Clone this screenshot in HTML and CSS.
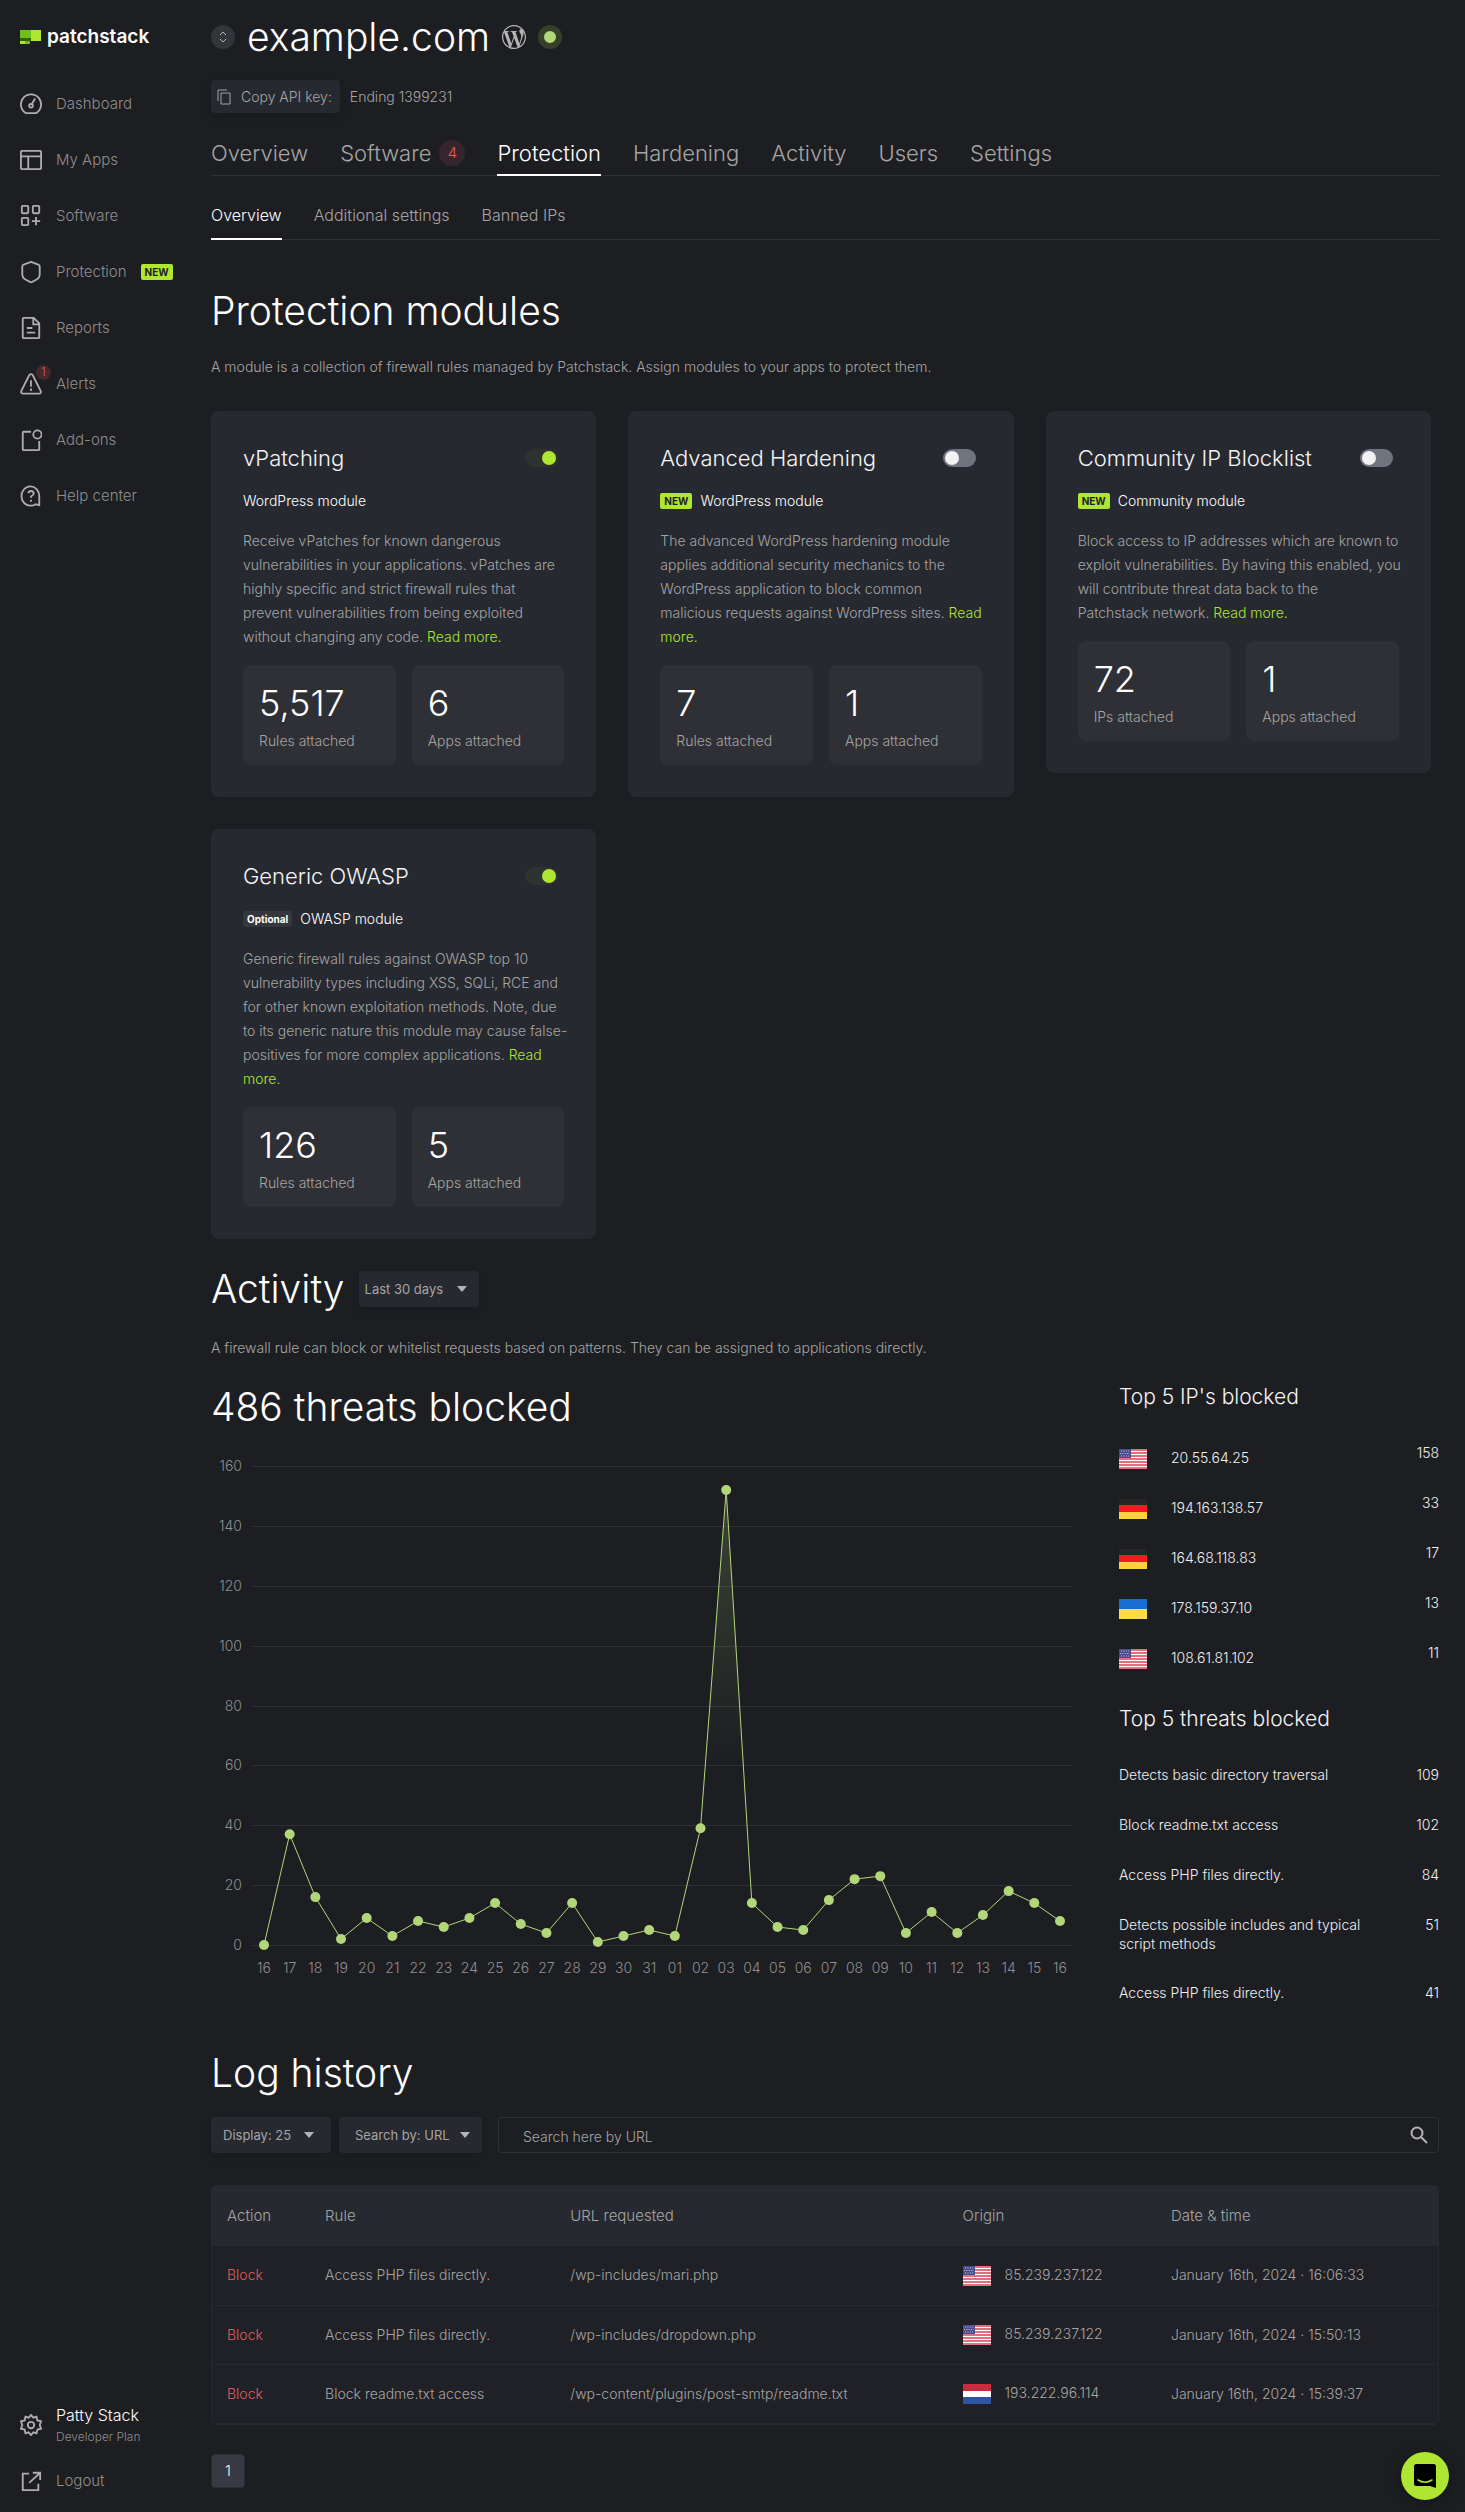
FILE: index.html
```html
<!DOCTYPE html>
<html lang="en">
<head>
<meta charset="utf-8">
<meta name="viewport" content="width=device-width, initial-scale=1">
<title>example.com – Protection</title>
<link rel="stylesheet" href="styles.css">
</head>
<body>
<svg class="sprite" aria-hidden="true">
  <symbol id="flag-us" viewBox="0 0 28 20">
    <rect width="28" height="20" fill="#fff"/>
    <path d="M0 1h28M0 4h28M0 7h28M0 10h28M0 13h28M0 16h28M0 19h28" stroke="#dd3f54" stroke-width="1.6"/>
    <rect width="12" height="9" fill="#4a4a8c"/>
    <path d="M2 2h9M1 4.500h10M2 7h9" stroke="#c9c9e4" stroke-width="1" stroke-dasharray="1 1.400"/>
  </symbol>
  <symbol id="flag-de" viewBox="0 0 28 20">
    <rect width="28" height="7" fill="#262626"/><rect y="6" width="28" height="7" fill="#f01c20"/><rect y="13" width="28" height="7" fill="#fdd23c"/>
  </symbol>
  <symbol id="flag-ua" viewBox="0 0 28 20">
    <rect width="28" height="10" fill="#196dd1"/><rect y="10" width="28" height="10" fill="#ffda4f"/>
  </symbol>
  <symbol id="flag-nl" viewBox="0 0 28 20">
    <rect width="28" height="20" fill="#fff"/><rect width="28" height="7" fill="#ca2c3f"/><rect y="13" width="28" height="7" fill="#2c56a2"/>
  </symbol>
</svg>
<div class="app">
  <aside class="sidebar">
    <a class="logo" href="#">
      <svg width="21" height="15" viewBox="0 0 21 15" aria-hidden="true"><path fill="#6fbf1b" d="M0 0h11v8H0zM5 11h5v3H5z"/><path fill="#afe632" d="M11 0h10v11H11zM0 11h5v3H0z"/><path fill="#35610f" d="M0 8h11v3H0z"/></svg>
      <span>patchstack</span>
    </a>
    <nav class="menu" aria-label="Main">
      <a href="#"><svg class="icon" viewBox="0 0 24 24"><path d="M6.500 22a11 11 0 1 1 11 0z"/><circle cx="12" cy="14" r="2"/><path d="M13 12l3.500-6"/></svg>Dashboard</a>
      <a href="#"><svg class="icon" viewBox="0 0 24 24"><rect x="1" y="2" width="22" height="20" rx="1"/><path d="M1 8h22M9 8v14"/></svg>My Apps</a>
      <a href="#"><svg class="icon" viewBox="0 0 24 24"><rect x="2" y="1" width="7" height="8" rx="1"/><rect x="14" y="1" width="7" height="8" rx="1"/><rect x="2" y="14" width="7" height="8" rx="1"/><path d="M17.500 13v9M13 17.500h9"/></svg>Software</a>
      <a href="#"><svg class="icon" viewBox="0 0 24 24"><path d="M12 1l8 3q1.500.5 1.500 2v9q0 3-3 5L12 23.500l-6.500-3.500q-3-2-3-5V6q0-1.500 1.500-2z"/></svg>Protection <span class="tag">NEW</span></a>
      <a href="#"><svg class="icon" viewBox="0 0 24 24"><path d="M4 1h11l6 6v15q0 1-1 1H4q-1 0-1-1V2q0-1 1-1zM14.500 1v7H21M7.500 12h6M7.500 17h9"/></svg>Reports</a>
      <a href="#"><span class="badged"><svg class="icon" viewBox="0 0 24 24"><path d="M10 2.500q2-2.500 4 0l8.500 17q1 3-2 3h-17q-3 0-2-3zM12 8v7M12 17v2.500"/></svg><span class="dot-count">1</span></span>Alerts</a>
      <a href="#"><svg class="icon" viewBox="0 0 24 24"><path d="M12 3H4q-1 0-1 1v18q0 1 1 1h16q1 0 1-1V13"/><circle cx="19" cy="6" r="4.500"/></svg>Add-ons</a>
      <a href="#"><svg class="icon" viewBox="0 0 24 24"><path d="M21 22V12a9.700 10.500 0 1 0-9 10.500q3 0 5-1.500z"/><path d="M9 9q.5-2.500 3-2.500T15 9q0 2-3 3.500v1.500M12 16v2.200"/></svg>Help center</a>
    </nav>
    <div class="account">
      <a class="user" href="#"><svg class="icon" viewBox="0 0 24 24"><path d="M12 1l2.500 3 3.500-1 1 4 4 1-1.500 4 1.500 4-4 1-1 4-3.500-1L12 23l-2.500-3-3.500 1-1-4-4-1 1.500-4L1 8l4-1 1-4 3.500 1z"/><circle cx="12" cy="12" r="3.500"/></svg><span><strong>Patty Stack</strong><small>Developer Plan</small></span></a>
      <a href="#"><svg class="icon" viewBox="0 0 24 24"><path d="M10 4H3v18h17v-7M14 3h8v8M22 3L10 14"/></svg>Logout</a>
    </div>
  </aside>

  <main class="main">
    <header class="site">
      <button class="switcher" type="button" aria-label="Switch site"><svg width="10" height="14" viewBox="0 0 10 14"><path d="M2 5l3-3 3 3M2 9l3 3 3-3"/></svg></button>
      <h1>example.com</h1>
      <svg class="wp" width="24" height="24" viewBox="0 0 24 24" aria-label="WordPress"><path fill="#b4b4b2" d="M21.469 6.825c.84 1.537 1.318 3.300 1.318 5.175 0 3.979-2.156 7.456-5.363 9.325l3.295-9.527c.615-1.540.820-2.771.820-3.864 0-.405-.026-.780-.070-1.110m-7.981.105c.647-.030 1.232-.105 1.232-.105.582-.075.514-.930-.067-.899 0 0-1.755.135-2.880.135-1.064 0-2.850-.150-2.850-.150-.585-.030-.661.855-.075.885 0 0 .540.061 1.125.090l1.680 4.605-2.370 7.080L5.354 6.900c.649-.030 1.234-.100 1.234-.100.585-.075.516-.930-.065-.896 0 0-1.746.138-2.874.138-.200 0-.438-.008-.690-.015C4.911 3.150 8.235 1.215 12 1.215c2.809 0 5.365 1.072 7.286 2.833-.046-.003-.091-.009-.141-.009-1.060 0-1.812.923-1.812 1.914 0 .890.513 1.643 1.060 2.531.411.720.890 1.643.890 2.977 0 .915-.354 1.994-.821 3.479l-1.075 3.585-3.900-11.610.001.014zM12 22.784c-1.059 0-2.081-.153-3.048-.437l3.237-9.406 3.315 9.087c.024.053.050.101.078.149-1.120.393-2.325.609-3.582.609M1.211 12c0-1.564.336-3.050.935-4.390L7.290 21.709C3.694 19.960 1.212 16.271 1.211 12M12 0C5.385 0 0 5.385 0 12s5.385 12 12 12 12-5.385 12-12S18.615 0 12 0"/></svg>
      <span class="status" role="img" aria-label="Online"></span>
    </header>
    <div class="api">
      <button class="btn copy" type="button"><svg width="14" height="16" viewBox="0 0 14 16"><path d="M1 12V1h9M4 4h9v11H4z"/></svg>Copy API key:</button>
      <span>Ending 1399231</span>
    </div>
    <nav class="tabs" aria-label="Site">
      <a href="#">Overview</a><a href="#">Software <span class="count">4</span></a><a class="on" href="#">Protection</a><a href="#">Hardening</a><a href="#">Activity</a><a href="#">Users</a><a href="#">Settings</a>
    </nav>
    <nav class="tabs subtabs" aria-label="Protection">
      <a class="on" href="#">Overview</a><a href="#">Additional settings</a><a href="#">Banned IPs</a>
    </nav>

    <section class="modules">
      <h2>Protection modules</h2>
      <p class="lead">A module is a collection of firewall rules managed by Patchstack. Assign modules to your apps to protect them.</p>
      <div class="cards">
        <article class="card">
          <div class="card-head"><h3 id="m1">vPatching</h3><input class="toggle" type="checkbox" checked aria-labelledby="m1"></div>
          <p class="kind">WordPress module</p>
          <p class="text">Receive vPatches for known dangerous vulnerabilities in your applications. vPatches are highly specific and strict firewall rules that prevent&nbsp;vulnerabilities from being exploited without changing any code. <a href="#">Read more.</a></p>
          <div class="stats"><div><b>5,517</b><span>Rules attached</span></div><div><b>6</b><span>Apps attached</span></div></div>
        </article>
        <article class="card">
          <div class="card-head"><h3 id="m2">Advanced Hardening</h3><input class="toggle" type="checkbox" aria-labelledby="m2"></div>
          <p class="kind"><span class="tag">NEW</span>WordPress module</p>
          <p class="text">The advanced WordPress hardening module applies additional security mechanics to the WordPress application to block common malicious requests against WordPress sites. <a href="#">Read more.</a></p>
          <div class="stats"><div><b>7</b><span>Rules attached</span></div><div><b>1</b><span>Apps attached</span></div></div>
        </article>
        <article class="card">
          <div class="card-head"><h3 id="m3">Community IP Blocklist</h3><input class="toggle" type="checkbox" aria-labelledby="m3"></div>
          <p class="kind"><span class="tag">NEW</span>Community module</p>
          <p class="text">Block access to IP addresses which are known to exploit vulnerabilities. By having this enabled, you will contribute threat data back to the Patchstack&nbsp;network. <a href="#">Read more.</a></p>
          <div class="stats"><div><b>72</b><span>IPs attached</span></div><div><b>1</b><span>Apps attached</span></div></div>
        </article>
        <article class="card">
          <div class="card-head"><h3 id="m4">Generic OWASP</h3><input class="toggle" type="checkbox" checked aria-labelledby="m4"></div>
          <p class="kind"><span class="tag muted">Optional</span>OWASP module</p>
          <p class="text">Generic firewall rules against OWASP top 10 vulnerability types including XSS, SQLi, RCE and for other known exploitation methods. Note, due to its generic nature this module may cause false-positives for more complex applications. <a href="#">Read more.</a></p>
          <div class="stats"><div><b>126</b><span>Rules attached</span></div><div><b>5</b><span>Apps attached</span></div></div>
        </article>
      </div>
    </section>

    <section class="activity">
      <div class="activity-head">
        <h2>Activity</h2>
        <span class="select range"><select aria-label="Period"><option>Last 30 days</option></select></span>
      </div>
      <p class="lead">A firewall rule can block or whitelist requests based on patterns. They can be assigned to applications directly.</p>
      <div class="activity-grid">
        <div>
          <h2>486 threats blocked</h2>
          <svg id="chart" class="chart" viewBox="0 0 860 530" role="img" aria-label="Threats blocked per day">
            <defs><linearGradient id="fade" x1="0" y1="0" x2="0" y2="1"><stop offset="0" stop-color="#b2d67a" stop-opacity=".2"/><stop offset=".6" stop-color="#b2d67a" stop-opacity="0"/></linearGradient></defs>
          </svg>
        </div>
        <div class="top">
          <h3>Top 5 IP's blocked</h3>
          <table class="ips">
            <tr><td><svg class="flag"><use href="#flag-us"/></svg>20.55.64.25</td><td>158</td></tr>
            <tr><td><svg class="flag"><use href="#flag-de"/></svg>194.163.138.57</td><td>33</td></tr>
            <tr><td><svg class="flag"><use href="#flag-de"/></svg>164.68.118.83</td><td>17</td></tr>
            <tr><td><svg class="flag"><use href="#flag-ua"/></svg>178.159.37.10</td><td>13</td></tr>
            <tr><td><svg class="flag"><use href="#flag-us"/></svg>108.61.81.102</td><td>11</td></tr>
          </table>
          <h3>Top 5 threats blocked</h3>
          <table class="threats">
            <tr><td>Detects basic directory traversal</td><td>109</td></tr>
            <tr><td>Block readme.txt access</td><td>102</td></tr>
            <tr><td>Access PHP files directly.</td><td>84</td></tr>
            <tr><td>Detects possible includes and typical script methods</td><td>51</td></tr>
            <tr><td>Access PHP files directly.</td><td>41</td></tr>
          </table>
        </div>
      </div>
    </section>

    <section class="log">
      <h2>Log history</h2>
      <div class="filters">
        <span class="select display"><select aria-label="Rows shown"><option>Display: 25</option></select></span>
        <span class="select by"><select aria-label="Search field"><option>Search by: URL</option></select></span>
        <label class="search"><input type="search" placeholder="Search here by URL" aria-label="Search here by URL"><svg width="18" height="18" viewBox="0 0 18 18"><circle cx="7" cy="7" r="5.500"/><path d="M11 11l6 6"/></svg></label>
      </div>
      <div class="log-box">
      <table class="log-table">
        <colgroup><col class="c-action"><col class="c-rule"><col class="c-url"><col class="c-origin"><col></colgroup>
        <thead><tr><th>Action</th><th>Rule</th><th>URL requested</th><th>Origin</th><th>Date &amp; time</th></tr></thead>
        <tbody>
          <tr><td class="block">Block</td><td>Access PHP files directly.</td><td>/wp-includes/mari.php</td><td><svg class="flag"><use href="#flag-us"/></svg>85.239.237.122</td><td>January 16th, 2024 · 16:06:33</td></tr>
          <tr><td class="block">Block</td><td>Access PHP files directly.</td><td>/wp-includes/dropdown.php</td><td><svg class="flag"><use href="#flag-us"/></svg>85.239.237.122</td><td>January 16th, 2024 · 15:50:13</td></tr>
          <tr><td class="block">Block</td><td>Block readme.txt access</td><td>/wp-content/plugins/post-smtp/readme.txt</td><td><svg class="flag"><use href="#flag-nl"/></svg>193.222.96.114</td><td>January 16th, 2024 · 15:39:37</td></tr>
        </tbody>
      </table>
      </div>
      <button class="page" type="button" aria-current="page">1</button>
    </section>
  </main>
</div>
<button class="chat" type="button" aria-label="Open chat"><svg width="22" height="24" viewBox="0 0 22 24"><path d="M2.500 0h17Q22 0 22 2.500V24l-6-2H2.500Q0 22 0 19.500v-17Q0 0 2.500 0z" fill="#000"/><path d="M4 16q7 4.500 14 0" fill="none" stroke="#afe632" stroke-width="1.500" stroke-linecap="round"/></svg></button>
<script src="chart.js"></script>
</body>
</html>
```
FILE: styles.css
```css
* { box-sizing: border-box; }

body {
  margin: 0;
  background: #1d1e22;
  color: #a5a5a3;
  font: 300 14px/20px Inter, "Liberation Sans", sans-serif;
}

h1, h2, h3, p { margin: 0; font-weight: 300; }
a { color: inherit; text-decoration: none; }
button, input, select { font: inherit; color: inherit; }
button { cursor: pointer; border: 0; padding: 0; }

h1, h2 { color: #fff; font-size: 39px; line-height: 44px; }
h3 { color: #f4f4f4; font-size: 22px; line-height: 30px; }

.sprite { display: none; }

.app {
  display: grid;
  grid-template-columns: 211px minmax(0, 1fr);
  min-height: 100vh;
}

/* Sidebar */
.sidebar {
  display: flex;
  flex-direction: column;
  padding: 25px 20px 3px;
  font-size: 15px;
}
.logo {
  display: flex;
  align-items: center;
  gap: 6px;
  height: 24px;
  color: #fff;
  font-size: 19px;
  font-weight: 600;
}
.menu { margin-top: 27px; }
.menu a, .account a {
  display: flex;
  align-items: center;
  gap: 14px;
  height: 56px;
  color: #8d8d8d;
  white-space: nowrap;
}
.icon {
  flex: none;
  width: 22px;
  height: 22px;
  fill: none;
  stroke: #adadab;
  stroke-width: 2;
}
.badged { position: relative; display: flex; }
.dot-count {
  position: absolute;
  top: -8px;
  left: 16px;
  width: 15px;
  border-radius: 50%;
  background: #43292e;
  color: #e05c5e;
  font-size: 11px;
  line-height: 15px;
  text-align: center;
}
.account { margin-top: auto; }
.account .user strong, .account .user small { display: block; font-weight: 300; }
.account .user strong { color: #fff; font-size: 16px; line-height: 24px; }
.account .user small { font-size: 12px; }

.tag {
  padding: 0 4px;
  border-radius: 2px;
  background: #afe632;
  color: #1d1e22;
  font-size: 10px;
  font-weight: 700;
  line-height: 16px;
}
.tag.muted { background: #36373d; color: #fff; }

/* Site header */
.main { padding: 13px 26px 23px 0; }
.site { display: flex; align-items: center; gap: 12px; height: 48px; }
.switcher {
  display: grid;
  place-items: center;
  width: 24px;
  height: 24px;
  border-radius: 50%;
  background: #34353a;
}
.switcher svg { fill: none; stroke: #b4b4b2; stroke-width: 1; }
.status {
  width: 24px;
  height: 24px;
  border: 6px solid #364029;
  border-radius: 50%;
  background: #b2d67a;
}
.api { display: flex; align-items: center; gap: 10px; margin-top: 19px; }
.copy {
  display: flex;
  align-items: center;
  gap: 10px;
  height: 33px;
  padding: 0 8px 0 6px;
}
.copy svg { fill: none; stroke: #a5a5a3; }
.btn, .select {
  border-radius: 4px;
  background: #272930;
  box-shadow: 0 4px 10px rgba(0, 0, 0, .1);
}

.tabs {
  display: flex;
  gap: 32px;
  height: 46px;
  margin-top: 17px;
  box-shadow: inset 0 -1px #2f3035;
  font-size: 22px;
}
.tabs a {
  display: flex;
  align-items: center;
  gap: 8px;
  border: solid transparent;
  border-width: 2px 0;
}
.tabs .on { color: #fff; border-bottom-color: #fff; }
.subtabs { height: 50px; margin-top: 14px; font-size: 16px; }
.count {
  width: 26px;
  border-radius: 50%;
  background: #35262b;
  color: #e05c5e;
  font-size: 15px;
  line-height: 26px;
  text-align: center;
}

/* Modules */
.modules { margin-top: 49px; }
.lead { margin-top: 24px; }
.cards {
  display: grid;
  grid-template-columns: repeat(3, minmax(0, 1fr));
  align-items: start;
  gap: 32px;
  margin: 34px 8px 0 0;
}
.card { padding: 32px; border-radius: 8px; background: #272930; }
.card-head { display: flex; justify-content: space-between; align-items: center; padding-right: 6px; }
.toggle {
  appearance: none;
  display: flex;
  width: 33px;
  height: 18px;
  margin: 0;
  padding: 2px;
  border-radius: 9px;
  background: #6f757e;
}
.toggle::before { content: ""; width: 14px; height: 14px; border-radius: 50%; background: #f2f2f2; }
.toggle:checked { justify-content: flex-end; background: #2e332f; }
.toggle:checked::before { background: #afe632; }
.kind { display: flex; align-items: center; gap: 8px; height: 16px; margin-top: 20px; color: #fff; }
.text { margin: 20px -5px 0 0; line-height: 24px; }
.text a { color: #afe632; }
.stats { display: grid; grid-template-columns: 1fr 1fr; gap: 16px; margin-top: 16px; }
.stats div { height: 100px; padding: 16px; border-radius: 8px; background: #2f3035; }
.stats b, .stats span { display: block; }
.stats b { margin-bottom: 6px; color: #fff; font-size: 36px; font-weight: 300; line-height: 44px; }

/* Activity */
.activity { margin-top: 28px; }
.activity-head { display: flex; align-items: center; gap: 14px; }
.select { position: relative; display: flex; height: 36px; }
.select select { appearance: none; width: 100%; border: 0; background: none; font-size: 13px; font-weight: 400; }
.select::after {
  content: "";
  position: absolute;
  top: 15px;
  right: 12px;
  border: 5px solid transparent;
  border-top: 6px solid #b4b4b2;
  border-bottom: 0;
  pointer-events: none;
}
.range { width: 120px; }
.range select { padding-left: 6px; }
.activity .lead { margin-top: 27px; }
.activity-grid {
  display: grid;
  grid-template-columns: minmax(0, 1fr) 320px;
  gap: 48px;
  margin-top: 27px;
}
.chart { display: block; width: 100%; margin-top: 26px; }
.chart text { fill: #8f8f8e; font-size: 14px; }
.grid-line { stroke: #2f3035; }
.line { fill: none; stroke: #b2d67a; }
.area { fill: url(#fade); }
.chart circle { fill: #b2d67a; }

.top h3 { font-size: 21px; line-height: 24px; }
.top table { width: 100%; border-collapse: collapse; color: #f0f0f0; line-height: 19px; }
.top td { padding: 15px 0; vertical-align: top; }
.top td:last-child { text-align: right; }
.ips { margin: 25px 0 23px; }
.top tr { height: 50px; }
.top .ips td { padding: 14px 0; }
.top .ips td:last-child { padding-top: 9px; }
.threats { margin-top: 19px; }
.threats td:first-child { padding-right: 48px; }
.flag { width: 28px; height: 20px; margin-right: 24px; vertical-align: middle; }

/* Log */
.log { margin-top: 33px; }
.filters { display: flex; margin-top: 22px; }
.display { width: 120px; }
.display select { padding-left: 12px; }
.by { width: 143px; margin: 0 16px 0 8px; }
.by select { padding-left: 16px; }
.display::after { right: 17px; }
.search {
  display: flex;
  flex: 1;
  align-items: center;
  padding: 0 10px 0 24px;
  border: 1px solid #2f3035;
  border-radius: 4px;
}
.search input { flex: 1; min-width: 0; border: 0; padding: 3px 0 0; outline: 0; background: none; }
.search input::placeholder { color: #a5a5a3; }
.search svg { fill: none; stroke: #b4b4b2; stroke-width: 2; }
.log-box {
  margin-top: 32px;
  border: solid #272930;
  border-width: 0 1px 1px;
  border-radius: 5px;
  background: #202126;
  overflow: hidden;
}
.log-table { width: 100%; table-layout: fixed; border-collapse: collapse; }
.c-action { width: 8%; }
.c-rule { width: 20%; }
.c-url { width: 32%; }
.c-origin { width: 17%; }
.log-table th, .log-table td { padding: 0 0 0 15px; text-align: left; }
.log-table th { height: 61px; background: #272930; font-size: 15px; font-weight: 300; }
.log-table td { height: 59px; border-bottom: 1px solid #272930; }
.log-table .flag { margin-right: 14px; }
.log-table .block { color: #e05c5e; }
.page {
  width: 34px;
  height: 34px;
  margin-top: 29px;
  border: 1px solid #2c2d33;
  border-radius: 4px;
  background: #383a43;
  color: #f0f0f0;
  font-size: 15px;
}

.chat {
  position: fixed;
  right: 16px;
  bottom: 12px;
  display: grid;
  place-items: center;
  width: 48px;
  height: 48px;
  border-radius: 50%;
  background: #afe632;
  box-shadow: 0 2px 16px rgba(0, 0, 0, .3);
}
```
FILE: chart.js
```js
const values = [0, 37, 16, 2, 9, 3, 8, 6, 9, 14, 7, 4, 14, 1, 3, 5, 3, 39, 152, 14, 6, 5, 15, 22, 23, 4, 11, 4, 10, 18, 14, 8];
const firstDay = 16;
const daysInMonth = 31;

const chart = document.getElementById('chart');
const left = 53, right = 849, top160 = 11, base = 490;
const x = i => left + (right - left) * i / (values.length - 1);
const y = v => base - (base - top160) * v / 160;

function add(name, attrs, text) {
  const node = document.createElementNS('http://www.w3.org/2000/svg', name);
  for (const key in attrs) node.setAttribute(key, attrs[key]);
  if (text !== undefined) node.textContent = text;
  chart.appendChild(node);
}

for (let v = 0; v <= 160; v += 20) {
  const py = Math.round(y(v)) + 0.5;
  add('line', { class: 'grid-line', x1: 41, x2: 860, y1: py, y2: py });
  add('text', { x: 31, y: py + 4, 'text-anchor': 'end' }, v);
}

const points = values.map((v, i) => x(i) + ',' + y(v)).join(' ');
add('polygon', { class: 'area', points: left + ',' + base + ' ' + points + ' ' + right + ',' + base });
add('polyline', { class: 'line', points });

values.forEach((v, i) => {
  const day = (firstDay - 1 + i) % daysInMonth + 1;
  add('circle', { cx: x(i), cy: y(v), r: 5 });
  add('text', { x: x(i), y: 518, 'text-anchor': 'middle' }, String(day).padStart(2, '0'));
});
```
